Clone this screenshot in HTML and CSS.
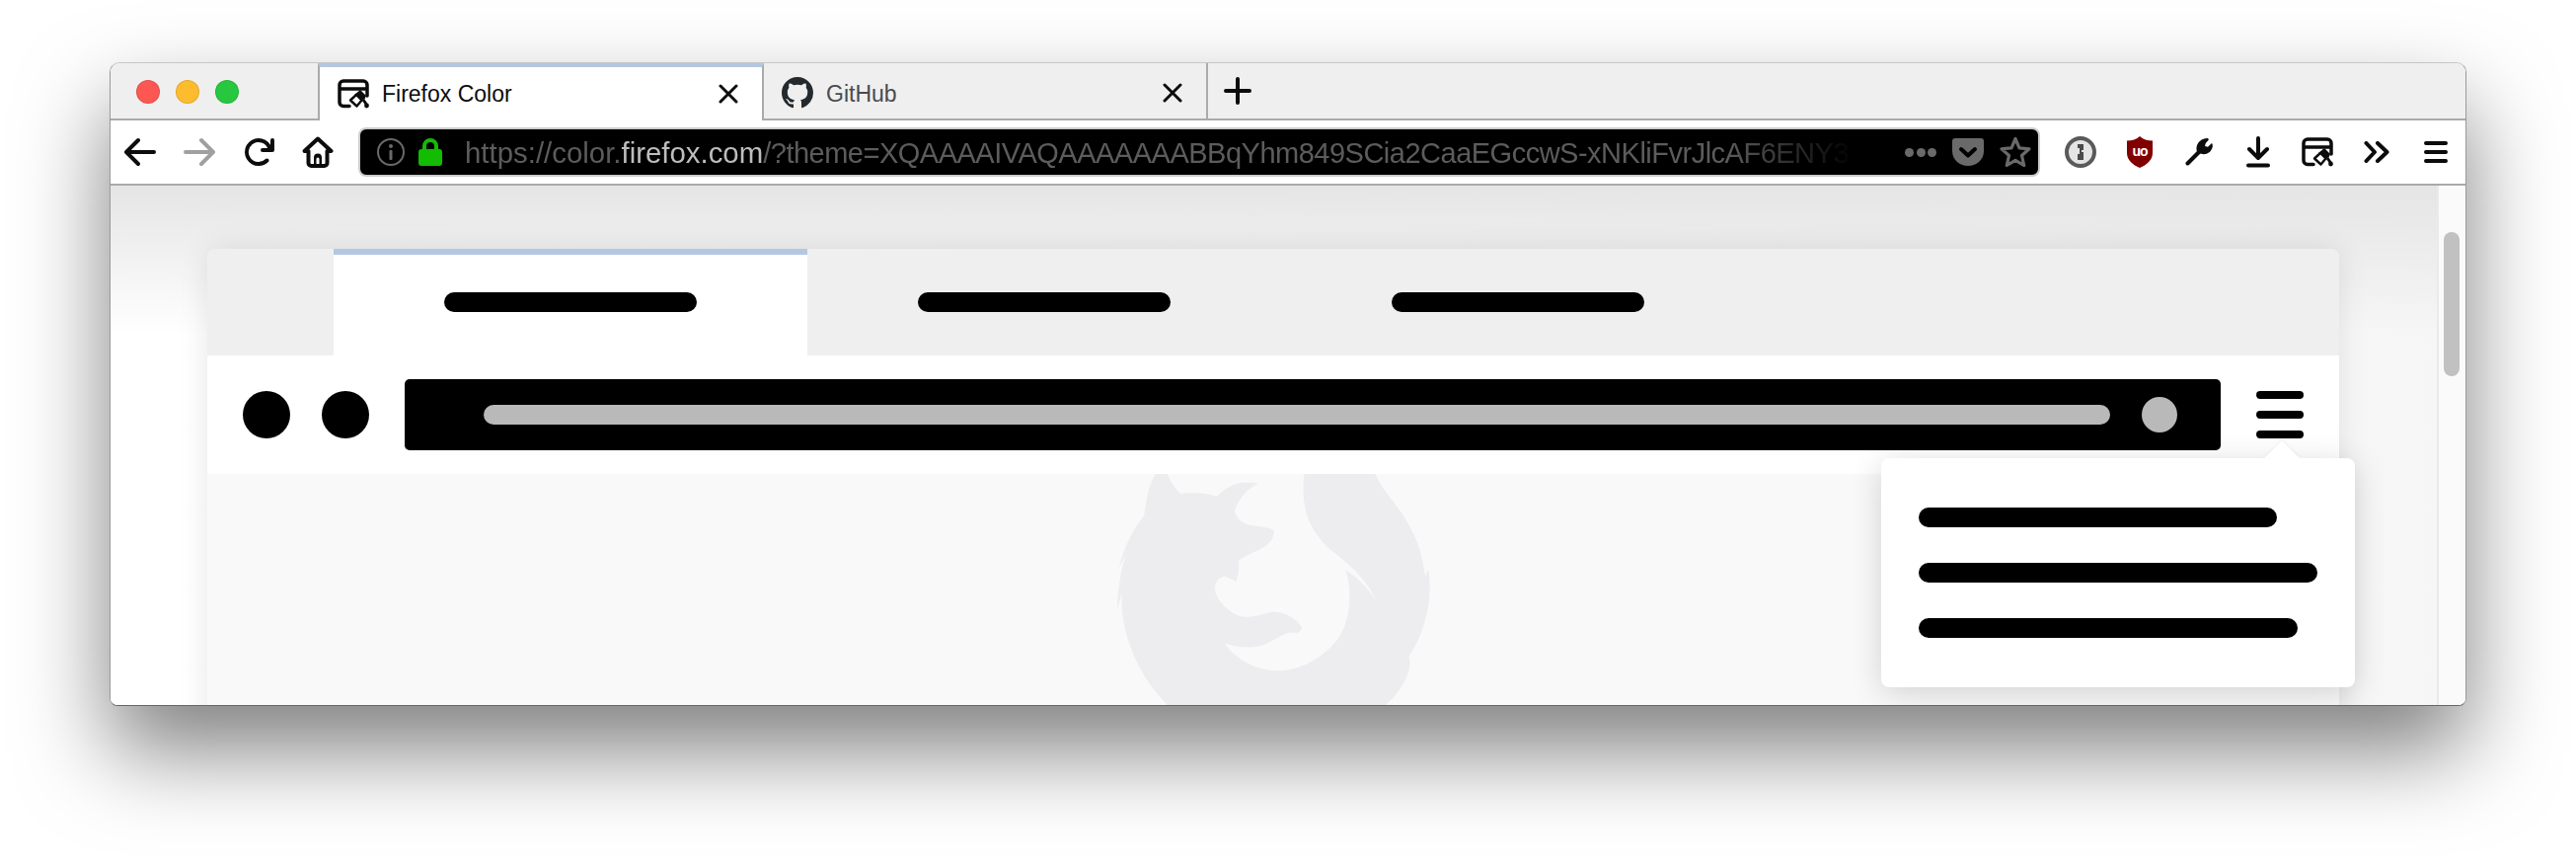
FILE: index.html
```html
<!DOCTYPE html>
<html lang="en">
<head>
<meta charset="utf-8">
<title>Firefox Color</title>
<link rel="stylesheet" href="styles.css">
</head>
<body>
<div class="window">
  <div class="strip">
    <div class="lights"><span class="light red"></span><span class="light yellow"></span><span class="light green"></span></div>
    <div class="tab active">
      <svg class="fav" viewBox="0 0 32 30" width="32" height="30"><path d="M12 27.500H6A4 4 0 0 1 2 23.500V6A4 4 0 0 1 6 2H26A4 4 0 0 1 30 6V17M2 10H30" fill="none" stroke="#0c0c0d" stroke-width="3.500" stroke-linecap="round"/><path d="M23 11 29 17 27.500 20.500 23 22 17 16Z" fill="#0c0c0d"/><path d="M19 16 24.500 21.500 19.500 27.500 13 21.500Z" fill="#fff" stroke="#0c0c0d" stroke-width="2.400" stroke-linejoin="round"/><path d="M26 21 29.500 26" stroke="#0c0c0d" stroke-width="3"/><circle cx="29.500" cy="27" r="2.400" fill="#0c0c0d"/></svg>
      <span class="tab-title">Firefox Color</span>
      <svg class="close" viewBox="0 0 20 20" width="20" height="20"><path d="M2 2 18 18M18 2 2 18" stroke="#0c0c0d" stroke-width="3" stroke-linecap="round"/></svg>
    </div>
    <div class="tab">
      <svg class="fav" viewBox="0 0 16 16" width="32" height="32"><path fill="#24292e" d="M8 0C3.580 0 0 3.580 0 8c0 3.540 2.290 6.530 5.470 7.590.4.070.55-.17.55-.38 0-.19-.01-.82-.01-1.490-2.010.37-2.530-.49-2.690-.94-.09-.23-.48-.94-.82-1.130-.28-.15-.68-.52-.01-.53.63-.01 1.080.58 1.230.82.72 1.210 1.870.87 2.330.66.07-.52.28-.87.51-1.070-1.780-.2-3.640-.89-3.640-3.950 0-.87.31-1.590.82-2.150-.08-.2-.36-1.020.08-2.120 0 0 .67-.21 2.200.82.64-.18 1.320-.27 2-.27.68 0 1.360.09 2 .27 1.530-1.040 2.200-.82 2.200-.82.44 1.100.16 1.920.08 2.120.51.56.82 1.270.82 2.150 0 3.070-1.870 3.750-3.650 3.950.29.25.54.73.54 1.480 0 1.070-.01 1.930-.01 2.200 0 .21.15.46.55.38A8.013 8.013 0 0 0 16 8c0-4.420-3.580-8-8-8z"/></svg>
      <span class="tab-title dim">GitHub</span>
      <svg class="close" viewBox="0 0 20 20" width="20" height="20"><path d="M2 2 18 18M18 2 2 18" stroke="#0c0c0d" stroke-width="3" stroke-linecap="round"/></svg>
    </div>
    <div class="newtab"><svg viewBox="0 0 28 28" width="28" height="28"><path d="M14 2V26M2 14H26" stroke="#0c0c0d" stroke-width="4" stroke-linecap="round"/></svg></div>
  </div>

  <div class="toolbar">
    <div class="btn"><svg viewBox="0 0 16 16" width="32" height="32"><path fill="#0c0c0d" d="M15 7H3.414l4.293-4.293a1 1 0 0 0-1.414-1.414l-6 6a1 1 0 0 0 0 1.414l6 6a1 1 0 0 0 1.414-1.414L3.414 9H15a1 1 0 0 0 0-2z"/></svg></div>
    <div class="btn"><svg viewBox="0 0 16 16" width="32" height="32"><path fill="#a0a0a0" d="M1 7h11.586L8.293 2.707a1 1 0 0 1 1.414-1.414l6 6a1 1 0 0 1 0 1.414l-6 6a1 1 0 0 1-1.414-1.414L12.586 9H1a1 1 0 0 1 0-2z"/></svg></div>
    <div class="btn"><svg viewBox="0 0 16 16" width="32" height="32"><path fill="#0c0c0d" d="M15 1a1 1 0 0 0-1 1v2.418A6.995 6.995 0 1 0 8 15a6.954 6.954 0 0 0 4.950-2.050 1 1 0 0 0-1.414-1.414A5.019 5.019 0 1 1 12.549 6H10a1 1 0 0 0 0 2h5a1 1 0 0 0 1-1V2a1 1 0 0 0-1-1z"/></svg></div>
    <div class="btn"><svg viewBox="0 0 32 32" width="32" height="32"><path fill="none" stroke="#0c0c0d" stroke-width="4" stroke-linejoin="round" stroke-linecap="round" d="M2.500 15 16 2.500 29.500 15H25.500V27A3 3 0 0 1 22.500 30H9.500A3 3 0 0 1 6.500 27V15Z"/><path fill="#0c0c0d" d="M12 30V21.500A4 4 0 0 1 20 21.500V30H17.500V23A1.500 1.500 0 0 0 14.500 23V30Z"/></svg></div>

    <div class="urlbar">
      <svg viewBox="0 0 28 28" width="28" height="28"><circle cx="14" cy="14" r="13" fill="none" stroke="#6a6a6a" stroke-width="2"/><circle cx="14" cy="8" r="2" fill="#6a6a6a"/><rect x="12.500" y="12" width="3" height="10" rx="1" fill="#6a6a6a"/></svg>
      <svg class="lock" viewBox="0 0 24 28" width="24" height="28"><path d="M6 13V8A6 6 0 0 1 18 8V13" fill="none" stroke="#12bc00" stroke-width="4"/><rect x="0" y="11" width="24" height="17" rx="3" fill="#12bc00"/></svg>
      <div class="url"><span class="url-dim">https://color.</span><span class="url-host">firefox.com</span><span class="url-query">/?theme=XQAAAAIVAQAAAAAAABBqYhm849SCia2CaaEGccwS-xNKliFvrJlcAF6ENY3</span></div>
      <div class="more"><span></span><span></span><span></span></div>
      <svg class="pocket" viewBox="0 0 32 28" width="32" height="28"><path fill="#6a6a6a" d="M3 0H29A3 3 0 0 1 32 3V13C32 22 24 28 16 28S0 22 0 13V3A3 3 0 0 1 3 0Z"/><path d="M9 11 16 17.500 23 11" fill="none" stroke="#000" stroke-width="4" stroke-linecap="round" stroke-linejoin="round"/></svg>
      <svg class="star" viewBox="0 0 32 32" width="32" height="32"><path d="M16 2.500 20 11.800 30 12.800 22.500 19.500 24.700 29.500 16 24.300 7.300 29.500 9.500 19.500 2 12.800 12 11.800Z" fill="none" stroke="#6a6a6a" stroke-width="3.200" stroke-linejoin="round"/></svg>
    </div>

    <div class="btn"><svg viewBox="0 0 32 32" width="32" height="32"><circle cx="16" cy="16" r="14" fill="#e4e4e4" stroke="#5a5a5a" stroke-width="4"/><path d="M13 8H19V14H17V16H19V24H13V18H15V12H13Z" fill="#4a4a4a"/></svg></div>
    <div class="btn"><svg viewBox="0 0 32 32" width="32" height="32"><path d="M16 0C19 3 24 4.500 29 4.500V17C29 24 23 29 16 32 9 29 3 24 3 17V4.500C8 4.500 13 3 16 0Z" fill="#800000"/><text class="ublock" x="16" y="20" text-anchor="middle">uo</text></svg></div>
    <div class="btn"><svg viewBox="0 0 28 28" width="28" height="28"><path d="M2.500 25.500 14 14" stroke="#0c0c0d" stroke-width="4" stroke-linecap="round"/><path fill="#0c0c0d" d="M22.500 0C17 0 12 4 11.500 9.500 11.300 12 12 14.500 13 16L16 15.500C20 17.500 26.500 15 27.800 8.500 28 7 27.500 5.500 27 5L23 8.800 20 8 20.800 5 23.500 2C24.300 1 23.500 0 22.500 0Z"/></svg></div>
    <div class="btn"><svg viewBox="0 0 24 32" width="24" height="32"><path d="M12 2V21M3 13 12 22 21 13M2 29.500H22" fill="none" stroke="#0c0c0d" stroke-width="4" stroke-linecap="round" stroke-linejoin="round"/></svg></div>
    <div class="btn"><svg viewBox="0 0 32 30" width="32" height="30"><path d="M12 27.500H6A4 4 0 0 1 2 23.500V6A4 4 0 0 1 6 2H26A4 4 0 0 1 30 6V17M2 10H30" fill="none" stroke="#0c0c0d" stroke-width="3.500" stroke-linecap="round"/><path d="M23 11 29 17 27.500 20.500 23 22 17 16Z" fill="#0c0c0d"/><path d="M19 16 24.500 21.500 19.500 27.500 13 21.500Z" fill="#fff" stroke="#0c0c0d" stroke-width="2.400" stroke-linejoin="round"/><path d="M26 21 29.500 26" stroke="#0c0c0d" stroke-width="3"/><circle cx="29.500" cy="27" r="2.400" fill="#0c0c0d"/></svg></div>
    <div class="btn"><svg viewBox="0 0 26 22" width="26" height="22"><path d="M2.500 2 11 11 2.500 20M14 2 23.500 11 14 20" fill="none" stroke="#0c0c0d" stroke-width="4" stroke-linecap="round" stroke-linejoin="round"/></svg></div>
    <div class="btn"><svg viewBox="0 0 24 22" width="24" height="22"><path d="M2 2H22M2 11H22M2 20H22" stroke="#0c0c0d" stroke-width="4" stroke-linecap="round"/></svg></div>
  </div>

  <div class="viewport">
    <div class="page">
      <div class="mock">
        <div class="mock-tabs">
          <div class="mock-tab on"><span class="pill"></span></div>
          <div class="mock-tab"><span class="pill"></span></div>
          <div class="mock-tab"><span class="pill"></span></div>
        </div>
        <div class="mock-toolbar">
          <span class="dot"></span>
          <span class="dot"></span>
          <div class="mock-url"><span class="mock-field"></span><span class="mock-circle"></span></div>
          <div class="mock-menu"><span></span><span></span><span></span></div>
        </div>
        <div class="mock-body">
          <svg class="fox" viewBox="243 120 952 702" width="317" height="234"><path fill="#ededf0" d="M360 120L395 120C405 145 420 165 435 180C465 174 510 176 545 188C565 170 590 150 620 147C640 145 660 146 672 148C640 165 610 195 600 235C610 262 630 275 665 278C690 280 710 285 720 292C720 320 700 340 665 355C640 366 620 375 612 385C615 405 612 425 605 447C590 440 580 432 570 431C550 432 540 450 540 470C542 500 575 530 600 545C625 560 660 555 690 545C725 532 770 540 805 585C802 605 785 605 770 602C745 605 720 630 680 642C645 650 605 648 570 635C600 680 660 718 735 718C800 718 870 680 915 620C950 570 962 480 937 410C975 435 1005 465 1030 505C1005 445 960 405 915 368C850 320 795 250 812 120L1028 120C1045 160 1085 205 1110 240C1145 295 1170 350 1180 430L1190 410C1200 480 1190 530 1175 580C1165 615 1150 645 1130 675C1140 700 1125 745 1105 770C1090 795 1075 810 1060 822L395 822C350 775 310 720 285 650C262 590 253 530 258 480L243 530C243 480 253 410 270 365L248 405C262 345 290 290 325 245C330 200 340 150 360 120Z"/></svg>
        </div>
        <div class="panel">
          <span class="line l1"></span>
          <span class="line l2"></span>
          <span class="line l3"></span>
        </div>
      </div>
    </div>
    <div class="scrollbar"><span class="thumb"></span></div>
  </div>
</div>
</body>
</html>
```

FILE: styles.css
```css
* { box-sizing: border-box; }
html, body { margin: 0; height: 874px; overflow: hidden; background: #fff; }
body { padding: 63px 0 0 111px; font-family: "Liberation Sans", Arial, sans-serif; }

.window {
  width: 2388px;
  height: 652px;
  display: flex;
  flex-direction: column;
  background: #fff;
  border: 1px solid #9a9a9a;
  border-top-color: #c6c6c6;
  border-bottom-color: #666;
  border-radius: 10px 10px 8px 8px;
  overflow: hidden;
  box-shadow: 0 45px 90px rgba(0, 0, 0, .5);
}

/* tab strip */
.strip {
  display: flex;
  height: 58px;
  flex: none;
  background: #efefef;
  border-bottom: 2px solid #aaa;
}
.lights {
  width: 210px;
  display: flex;
  gap: 16px;
  padding: 17px 0 0 26px;
}
.light { width: 24px; height: 24px; border-radius: 50%; border: 1px solid rgba(0, 0, 0, .1); }
.red { background: #fc5753; }
.yellow { background: #fdbc2e; }
.green { background: #27c83f; }

.tab {
  width: 450px;
  height: 56px;
  display: flex;
  align-items: center;
  padding: 4px 24px 0 18px;
  border-right: 2px solid #aaa;
}
.tab.active {
  width: 452px;
  height: 58px;
  position: relative;
  background: #fff;
  border-left: 2px solid #aaa;
  border-top: 4px solid #b4c7e0;
  padding-top: 0;
}
.fav { flex: none; }
.tab-title { margin-left: 13px; font-size: 23px; color: #0c0c0d; }
.tab-title.dim { color: #4a4a4f; padding-top: 2px; }
.close { flex: none; margin-left: auto; }
.newtab { width: 60px; display: flex; align-items: center; justify-content: center; }

/* toolbar */
.toolbar {
  height: 66px;
  flex: none;
  display: flex;
  align-items: center;
  background: #fff;
  border-bottom: 2px solid #aaa;
}
.btn {
  width: 60px;
  height: 64px;
  flex: none;
  display: flex;
  align-items: center;
  justify-content: center;
}
.urlbar {
  flex: 1;
  min-width: 0;
  height: 50px;
  margin: 0 11px;
  display: flex;
  align-items: center;
  padding-left: 17px;
  background: #000;
  border: 2px solid #ccc;
  border-radius: 8px;
}
.urlbar svg { flex: none; }
.lock { margin-left: 14px; }
.url {
  flex: 1;
  min-width: 0;
  margin-left: 23px;
  padding-top: 2px;
  font-size: 29.400px;
  line-height: 44px;
  white-space: nowrap;
  overflow: hidden;
  -webkit-mask-image: linear-gradient(to left, transparent 0, #000 130px);
  mask-image: linear-gradient(to left, transparent 0, #000 130px);
}
.url-dim { color: #5c5c5c; }
.url-host { color: #bdbdbd; }
.url-query { color: #5c5c5c; font-size: 29px; letter-spacing: -.5px; }
.more { flex: none; display: flex; gap: 2.500px; margin-left: 50px; }
.more span { width: 9px; height: 9px; border-radius: 50%; background: #6a6a6a; }
.pocket { margin-left: 16px; }
.star { margin: 0 7px 0 16px; }
.ublock { font-family: "Liberation Sans", Arial, sans-serif; font-size: 14px; font-weight: 700; letter-spacing: -1px; fill: #fff; }

/* viewport */
.viewport { flex: 1; min-height: 0; display: flex; }
.page {
  flex: 1;
  min-width: 0;
  overflow: hidden;
  padding: 64px 0 0 98px;
  background:
    linear-gradient(180deg, #e5e5e5 0, rgba(229, 229, 229, 0) 150px),
    linear-gradient(90deg, #fff 0, #fdfdfd 50%, #f6f6f6 100%);
}
.scrollbar {
  width: 29px;
  flex: none;
  padding: 47px 0 0 5px;
  background: #fafafa;
  border-left: 2px solid #eaeaea;
}
.thumb { display: block; width: 16px; height: 146px; border-radius: 8px; background: #c1c1c1; }

/* page mock browser */
.mock {
  position: relative;
  width: 2160px;
  height: 500px;
  display: flex;
  flex-direction: column;
  border-radius: 8px 8px 0 0;
  box-shadow: 0 0 30px rgba(0, 0, 0, .1);
}
.mock-tabs {
  height: 108px;
  flex: none;
  display: flex;
  padding-left: 128px;
  background: #efefef;
  border-radius: 8px 8px 0 0;
}
.mock-tab {
  width: 480px;
  display: flex;
  align-items: center;
  justify-content: center;
}
.mock-tab.on { background: #fff; border-top: 6px solid #b4c7e0; padding-bottom: 6px; }
.pill { width: 256px; height: 20px; border-radius: 10px; background: #000; }

.mock-toolbar {
  height: 120px;
  flex: none;
  display: flex;
  align-items: center;
  padding: 0 36px;
  background: #fff;
}
.dot { width: 48px; height: 48px; flex: none; border-radius: 50%; background: #000; margin-right: 32px; }
.dot + .dot { margin-right: 36px; }
.mock-url {
  flex: 1;
  height: 72px;
  display: flex;
  align-items: center;
  gap: 32px;
  padding: 0 44px 0 80px;
  background: #000;
  border-radius: 5px;
}
.mock-field { flex: 1; height: 20px; border-radius: 10px; background: #b9b9b9; }
.mock-circle { width: 36px; height: 36px; border-radius: 50%; background: #b9b9b9; }
.mock-menu { width: 48px; margin-left: 36px; display: flex; flex-direction: column; gap: 12px; }
.mock-menu span { height: 8px; border-radius: 4px; background: #000; }

.mock-body {
  flex: 1;
  min-height: 0;
  display: flex;
  justify-content: center;
  background: #f9f9fa;
  overflow: hidden;
}
.fox { flex: none; }

.panel {
  position: absolute;
  top: 212px;
  right: -16px;
  width: 480px;
  height: 232px;
  display: flex;
  flex-direction: column;
  gap: 36px;
  padding: 50px 0 0 38px;
  background: #fff;
  border-radius: 8px;
  box-shadow: 0 6px 32px rgba(0, 0, 0, .16);
}
.panel::before {
  content: "";
  position: absolute;
  top: -18px;
  right: 56px;
  border-left: 18px solid transparent;
  border-right: 18px solid transparent;
  border-bottom: 18px solid #fff;
  filter: drop-shadow(0 -1px 1px rgba(0, 0, 0, .06));
}
.line { height: 20px; border-radius: 10px; background: #000; }
.l1 { width: 363px; }
.l2 { width: 404px; }
.l3 { width: 384px; }
```
